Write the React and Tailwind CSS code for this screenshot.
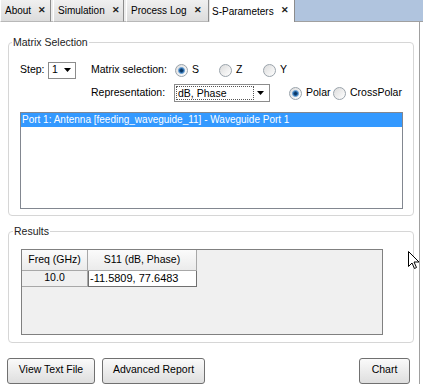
import React from "react";

function Tab({ label, w, active }) {
  return (
    <div
      className={
        "shrink-0 whitespace-nowrap flex items-center gap-[7px] text-[10px] " +
        (active
          ? "h-[22px] bg-white border-r border-r-[#8c8c8c] border-l border-l-[#e6e6e6] pl-[2px]"
          : "h-[22px] pl-[4px] bg-gradient-to-b from-[#f0f0f0] to-[#dcdcdc] border-r border-r-[#8c8c8c] border-l border-l-[#ffffff] border-b border-b-[#b8b8b8]")
      }
      style={{ width: w }}
    >
      <span className="text-black">{label}</span>
      <span className="text-[9px] font-bold text-[#222]">✕</span>
    </div>
  );
}

function Radio({ checked, label, w }) {
  return (
    <div className="flex items-center gap-[4px] whitespace-nowrap shrink-0" style={{ width: w }}>
      <div className="shrink-0 w-[13px] h-[13px] rounded-full border border-[#9aa3ab] bg-gradient-to-br from-[#dcdcdc] to-[#ffffff] flex items-center justify-center">
        {checked && (
          <div className="w-[7px] h-[7px] rounded-full bg-[#1f5f9e] border border-[#6fa6d8] flex items-center justify-center">
            <div className="w-[3px] h-[3px] rounded-full bg-[#0c3560]" />
          </div>
        )}
      </div>
      <span>{label}</span>
    </div>
  );
}

function Arrow() {
  return (
    <svg width="7" height="4" viewBox="0 0 7 4">
      <path d="M0 0 L7 0 L3.5 4 Z" fill="#000" />
    </svg>
  );
}

function Button({ label, w }) {
  return (
    <div
      className="shrink-0 whitespace-nowrap h-[26px] rounded-[3px] border border-[#707070] bg-gradient-to-b from-[#fafafa] to-[#dedede] flex items-start justify-center pt-[3px] text-[10.5px]"
      style={{ width: w }}
    >
      {label}
    </div>
  );
}

export default function App() {
  return (
    <div
      className="w-[423px] h-[384px] overflow-hidden bg-white relative text-[10.5px] text-black"
      style={{ fontFamily: '"Liberation Sans", Arial, sans-serif' }}
    >
      {/* Tab bar */}
      <div className="flex h-[22px] bg-[#b0c4de]">
        <Tab label="About" w={51} />
        <div className="shrink-0 w-[2px] h-[22px] bg-[#ececec] border-b border-b-[#b8b8b8]" />
        <Tab label="Simulation" w={71} />
        <div className="shrink-0 w-[2px] h-[22px] bg-[#ececec] border-b border-b-[#b8b8b8]" />
        <Tab label="Process Log" w={83} />
        <Tab label="S-Parameters" w={86} active />
        <div className="flex-1 border-b border-b-[#a0a0a0]" />
      </div>

      {/* Content */}
      <div className="w-[420px] h-[362px] border-r border-r-[#a0a0a0] pl-[8px] pr-[5px] pt-[20px] flex flex-col">
        {/* Matrix Selection */}
        <div className="relative h-[180px] border border-[#d6d6d6] rounded-[4px] pt-[18px] pl-[11px] pr-[10px]">
          <div className="absolute top-[-8px] left-[3px] bg-white px-[1px] text-[#222]">
            Matrix Selection
          </div>
          <div className="flex items-center h-[18px] whitespace-nowrap">
            <span className="w-[28px]">Step:</span>
            <div className="w-[28px] h-[17px] border border-[#8c8c8c] bg-white flex items-center justify-between pl-[3px] pr-[4px]">
              <span>1</span>
              <Arrow />
            </div>
            <span className="ml-[15px] w-[84px]">Matrix selection:</span>
            <Radio checked label="S" w={44} />
            <Radio label="Z" w={44} />
            <Radio label="Y" w={40} />
          </div>
          <div className="flex items-center h-[18px] mt-[5px] whitespace-nowrap">
            <span className="ml-[71px] w-[84px]">Representation:</span>
            <div className="w-[97px] h-[18px] border border-[#8c8c8c] bg-white flex items-center pl-[1px] pr-[5px]">
              <div className="w-[78px] h-[14px] border border-dotted border-[#555] pl-[1px] leading-[12px]">
                dB, Phase
              </div>
              <div className="flex-1 flex justify-end">
                <Arrow />
              </div>
            </div>
            <div className="ml-[19px]">
              <Radio checked label="Polar" w={44} />
            </div>
            <Radio label="CrossPolar" w={70} />
          </div>
          <div className="mt-[10px] w-[383px] h-[97px] border border-[#828790] bg-white">
            <div className="h-[14px] bg-[#3399ff] text-white text-[10px] pl-[1px] leading-[14px] whitespace-nowrap">
              Port 1: Antenna [feeding_waveguide_11] - Waveguide Port 1
            </div>
          </div>
        </div>

        {/* Results */}
        <div className="relative mt-[15px] h-[116px] border border-[#d6d6d6] rounded-[4px] pt-[17px] pl-[12px]">
          <div className="absolute top-[-8px] left-[4px] bg-white px-[1px] text-[#222]">
            Results
          </div>
          <div className="w-[362px] h-[86px] border border-[#808080] bg-[#f0f0f0]">
            <div className="flex">
              <div className="w-[66px] h-[21px] border-r border-b border-[#a8a8a8] bg-gradient-to-b from-[#fbfbfb] to-[#ebebeb] flex items-center justify-center">
                Freq (GHz)
              </div>
              <div className="w-[109px] h-[21px] border-r border-b border-[#a8a8a8] bg-gradient-to-b from-[#fbfbfb] to-[#ebebeb] flex items-center justify-center">
                S11 (dB, Phase)
              </div>
            </div>
            <div className="flex">
              <div className="w-[66px] h-[16px] border-r border-b border-[#a8a8a8] bg-[#f0f0f0] flex items-center justify-center">
                10.0
              </div>
              <div className="w-[109px] h-[16px] border border-t-0 border-[#707070] bg-white flex items-center pl-[1px] text-[11px]">
                -11.5809, 77.6483
              </div>
            </div>
          </div>
        </div>

        {/* Buttons */}
        <div className="flex mt-[15px] ml-[-1px] pr-[4px]">
          <Button label="View Text File" w={88} />
          <div className="ml-[7px]">
            <Button label="Advanced Report" w={103} />
          </div>
          <div className="flex-1" />
          <Button label="Chart" w={51} />
        </div>
      </div>

      {/* Mouse cursor */}
      <svg
        className="absolute left-[408px] top-[251px]"
        width="12"
        height="19"
        viewBox="0 0 12 19"
      >
        <path
          d="M0.5 0.5 L0.5 15.5 L4 12 L6.5 17.5 L8.5 16.5 L6 11 L11 11 Z"
          fill="#fff"
          stroke="#000"
          strokeWidth="1"
          strokeLinejoin="miter"
        />
      </svg>
    </div>
  );
}
